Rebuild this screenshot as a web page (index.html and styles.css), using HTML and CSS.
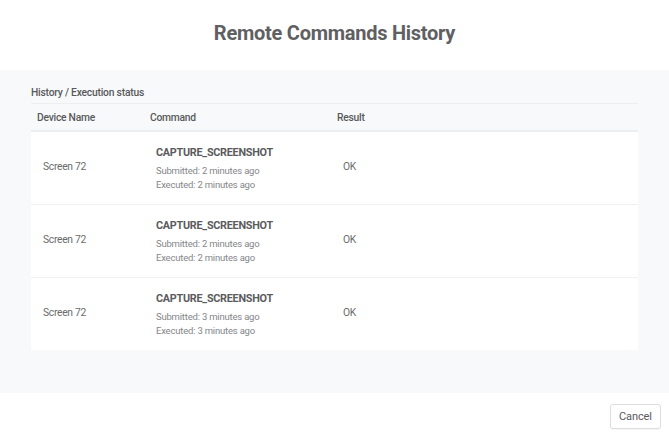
FILE: index.html
```html
<!DOCTYPE html>
<html>
<head>
<meta charset="utf-8">
<link rel="stylesheet" href="styles.css">
</head>
<body>
<div class="modal">
  <header class="modal-header">
    <h1 class="title">Remote Commands History</h1>
  </header>
  <section class="modal-body">
    <div class="section-label">History / Execution status</div>
    <div class="table">
      <div class="thead">
        <div class="cell c1">Device Name</div>
        <div class="cell c2">Command</div>
        <div class="cell c3">Result</div>
      </div>
      <div class="row">
        <div class="cell c1">Screen 72</div>
        <div class="cell c2">
          <div class="cmd">CAPTURE_SCREENSHOT</div>
          <div class="sub">Submitted: 2 minutes ago</div>
          <div class="sub">Executed: 2 minutes ago</div>
        </div>
        <div class="cell c3">OK</div>
      </div>
      <div class="row">
        <div class="cell c1">Screen 72</div>
        <div class="cell c2">
          <div class="cmd">CAPTURE_SCREENSHOT</div>
          <div class="sub">Submitted: 2 minutes ago</div>
          <div class="sub">Executed: 2 minutes ago</div>
        </div>
        <div class="cell c3">OK</div>
      </div>
      <div class="row">
        <div class="cell c1">Screen 72</div>
        <div class="cell c2">
          <div class="cmd">CAPTURE_SCREENSHOT</div>
          <div class="sub">Submitted: 3 minutes ago</div>
          <div class="sub">Executed: 3 minutes ago</div>
        </div>
        <div class="cell c3">OK</div>
      </div>
    </div>
  </section>
  <footer class="modal-footer">
    <button class="btn">Cancel</button>
  </footer>
</div>
</body>
</html>
```

FILE: styles.css
```css
html, body {
  margin: 0;
  padding: 0;
  background: #ffffff;
  font-family: Roboto, "Liberation Sans", Arial, sans-serif;
}
.modal {
  width: 669px;
  height: 437px;
  display: flex;
  flex-direction: column;
}
.modal-header {
  height: 70px;
  display: flex;
  align-items: center;
  justify-content: center;
  background: #ffffff;
}
.title {
  margin: 0;
  font-size: 20px;
  font-weight: 700;
  letter-spacing: -0.26px;
  color: #5f6062;
  line-height: 24px;
  padding-bottom: 4px;
}
.modal-body {
  height: 323px;
  box-sizing: border-box;
  background: #f8f9fa;
  padding: 15px 31px 0 31px;
}
.section-label {
  font-size: 10.3px;
  font-weight: 500;
  letter-spacing: -0.22px;
  color: #58595b;
  line-height: 15px;
  padding-bottom: 3px;
}
.table {
  border-top: 1px solid #eceef0;
}
.thead {
  display: flex;
  height: 26px;
  align-items: center;
  border-bottom: 2px solid #eceef0;
}
.thead .cell {
  font-size: 10.3px;
  font-weight: 500;
  letter-spacing: -0.25px;
  color: #58595b;
  padding-left: 6px;
}
.cell {
  box-sizing: border-box;
}
.c1 { width: 113px; }
.c2 { width: 187px; }
.c3 { flex: 1; }
.row {
  display: flex;
  align-items: center;
  height: 73px;
  box-sizing: border-box;
  background: #ffffff;
  border-bottom: 1px solid #f0f1f3;
}
.row:last-child {
  border-bottom: none;
  height: 72px;
}
.row .cell {
  padding-left: 12px;
  font-size: 10.3px;
  letter-spacing: -0.3px;
  color: #6a6b6d;
}
.row .c1,
.row .c3 {
  padding-bottom: 4px;
}
.cmd {
  font-size: 10.8px;
  font-weight: 700;
  letter-spacing: -0.25px;
  color: #5a5b5d;
  line-height: 16px;
  margin-bottom: 3px;
}
.row .cell .sub {
  font-size: 9.5px;
  letter-spacing: -0.2px;
  color: #85868a;
  line-height: 14px;
}
.modal-footer {
  flex: 1;
  display: flex;
  justify-content: flex-end;
  align-items: flex-start;
  padding: 11px 8px 0 0;
  background: #ffffff;
}
.btn {
  width: 51px;
  height: 25px;
  padding: 0;
  background: #ffffff;
  border: 1px solid #dcdde0;
  border-radius: 3px;
  font-family: Roboto, "Liberation Sans", Arial, sans-serif;
  font-size: 11px;
  letter-spacing: -0.1px;
  color: #58595b;
  box-shadow: 0 1px 1px rgba(0,0,0,0.04);
}
```
